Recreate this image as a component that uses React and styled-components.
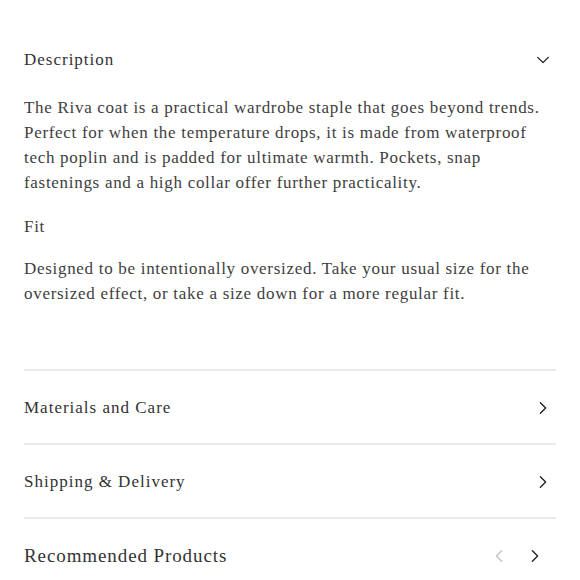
import styled, { createGlobalStyle } from "styled-components";

const GlobalStyle = createGlobalStyle`
  html, body {
    margin: 0;
    padding: 0;
    background: #fff;
  }
  body {
    font-family: "Liberation Serif", "DejaVu Serif", serif;
    color: #3a3a3a;
  }
`;

const Page = styled.div`
  width: 580px;
  padding: 40px 24px 0;
  box-sizing: border-box;
`;

const AccordionHeader = styled.div`
  display: flex;
  justify-content: space-between;
  align-items: center;
  height: 40px;
`;

const HeaderTitle = styled.span`
  font-size: ${(p) => p.$size || 17}px;
  letter-spacing: ${(p) => p.$spacing || 1}px;
  color: #333;
`;

const Body = styled.div`
  padding-top: 15px;
  padding-bottom: 63px;
`;

const Paragraph = styled.p`
  margin: 0 0 ${(p) => p.$gap || 0}px;
  font-size: 17px;
  line-height: 25px;
  letter-spacing: 0.7px;
  color: #3e3e3e;
`;

const Row = styled.div`
  border-top: 2px solid #ebebeb;
  display: flex;
  justify-content: space-between;
  align-items: center;
  box-sizing: border-box;
  height: 74px;
  padding-top: 2px;
`;

const Arrows = styled.div`
  display: flex;
  align-items: center;
  gap: 22px;
  margin-right: 14px;
`;

const IconSlot = styled.span`
  display: flex;
  margin-right: 6px;
`;

const Chevron = ({ dir = "right", color = "#222", size = 14 }) => {
  const paths = {
    right: "M5 2l6 6-6 6",
    left: "M11 2l-6 6 6 6",
    down: "M2 5l6 6 6-6",
  };
  return (
    <svg width={size} height={size} viewBox="0 0 16 16" fill="none">
      <path
        d={paths[dir]}
        stroke={color}
        strokeWidth="1.6"
        strokeLinecap="round"
        strokeLinejoin="round"
      />
    </svg>
  );
};

export default function App() {
  return (
    <>
      <GlobalStyle />
      <Page>
        <AccordionHeader>
          <HeaderTitle>Description</HeaderTitle>
          <IconSlot>
            <Chevron dir="down" />
          </IconSlot>
        </AccordionHeader>
        <Body>
          <Paragraph $gap={19}>
            The Riva coat is a practical wardrobe staple that goes beyond trends.
            Perfect for when the temperature drops, it is made from waterproof
            tech poplin and is padded for ultimate warmth. Pockets, snap
            fastenings and a high collar offer further practicality.
          </Paragraph>
          <Paragraph $gap={17}>Fit</Paragraph>
          <Paragraph>
            Designed to be intentionally oversized. Take your usual size for the
            oversized effect, or take a size down for a more regular fit.
          </Paragraph>
        </Body>
        <Row>
          <HeaderTitle>Materials and Care</HeaderTitle>
          <IconSlot>
            <Chevron />
          </IconSlot>
        </Row>
        <Row>
          <HeaderTitle>Shipping &amp; Delivery</HeaderTitle>
          <IconSlot>
            <Chevron />
          </IconSlot>
        </Row>
        <Row>
          <HeaderTitle $size={19} $spacing={0.9}>
            Recommended Products
          </HeaderTitle>
          <Arrows>
            <Chevron dir="left" color="#c4c4c4" />
            <Chevron />
          </Arrows>
        </Row>
      </Page>
    </>
  );
}
